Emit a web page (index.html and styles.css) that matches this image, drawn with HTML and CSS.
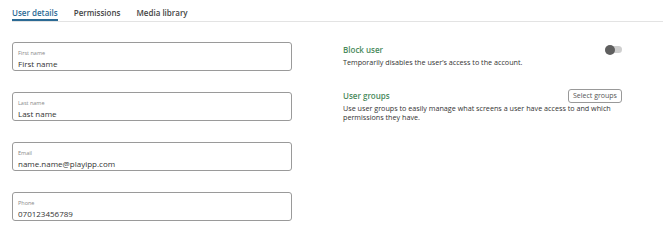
FILE: index.html
```html
<!DOCTYPE html>
<html lang="en">

<head>
    <meta charset="UTF-8">
    <meta name="viewport" content="width=device-width, initial-scale=1.0">
    <title>User details</title>
    <link rel="stylesheet" href="styles.css">
</head>

<body>
    <main class="page">
        <nav class="tabs">
            <a class="tab active">User details</a>
            <a class="tab">Permissions</a>
            <a class="tab">Media library</a>
        </nav>
        <section class="userForm">
            <div class="fields">
                <div class="field">
                    <label>First name</label>
                    <span class="value">First name</span>
                </div>
                <div class="field">
                    <label>Last name</label>
                    <span class="value">Last name</span>
                </div>
                <div class="field">
                    <label>Email</label>
                    <span class="value">name.name@playipp.com</span>
                </div>
                <div class="field">
                    <label>Phone</label>
                    <span class="value">070123456789</span>
                </div>
            </div>
            <div class="settings">
                <div class="setting">
                    <div class="settingHead">
                        <h3>Block user</h3>
                        <span class="toggle"><span class="knob"></span></span>
                    </div>
                    <p>Temporarily disables the user’s access to the account.</p>
                </div>
                <div class="setting">
                    <div class="settingHead">
                        <h3>User groups</h3>
                        <button class="selectButton">Select groups</button>
                    </div>
                    <p>Use user groups to easily manage what screens a user have access to and which permissions they have.</p>
                </div>
            </div>
        </section>
    </main>
</body>

</html>
```

FILE: styles.css
```css
* {
    box-sizing: border-box;
    font-family: 'Open Sans', sans-serif;
}

body {
    margin: 0;
    background: #fff;
    color: #333;
}

h3,
p {
    margin: 0;
    padding: 0;
}

.page {
    padding: 0 7px 0 12px;
}

.tabs {
    display: flex;
    gap: 16px;
    border-bottom: 1px solid #e3e3e3;
    height: 22px;
    padding-top: 6px;
}

.tab {
    font-size: 8px;
    font-weight: 600;
    color: #444;
    height: 15px;
    line-height: 13px;
}

.tab.active {
    color: #2b6a94;
    border-bottom: 2px solid #2b6a94;
}

.userForm {
    display: grid;
    grid-template-columns: 280px 279px;
    gap: 51px;
    padding-top: 20px;
}

.fields {
    display: flex;
    flex-direction: column;
    gap: 21px;
}

.field {
    display: flex;
    flex-direction: column;
    height: 29px;
    border: 1px solid #9a9a9a;
    border-radius: 3px;
    padding: 6px 5px 0;
}

.field label {
    font-size: 5.5px;
    color: #888;
    line-height: 8px;
}

.field .value {
    font-size: 8px;
    color: #333;
    line-height: 13px;
}

.settings {
    display: flex;
    flex-direction: column;
    gap: 21px;
    padding-top: 0;
}

.settingHead {
    display: flex;
    justify-content: space-between;
    align-items: center;
    height: 15px;
    margin-bottom: 1px;
}

.setting h3 {
    font-size: 8px;
    font-weight: 600;
    color: #4a8a5c;
}

.setting p {
    font-size: 7.2px;
    line-height: 9px;
    color: #333;
}

.toggle {
    position: relative;
    width: 17px;
    height: 7px;
    border-radius: 4px;
    background: #cfcfcf;
}

.knob {
    position: absolute;
    left: 0;
    top: -1.5px;
    width: 10px;
    height: 10px;
    border-radius: 50%;
    background: #5f5f5f;
}

.selectButton {
    font-size: 7px;
    color: #555;
    background: #fff;
    border: 1px solid #999;
    border-radius: 3px;
    height: 14px;
    width: 54px;
    padding: 0;
}
```
